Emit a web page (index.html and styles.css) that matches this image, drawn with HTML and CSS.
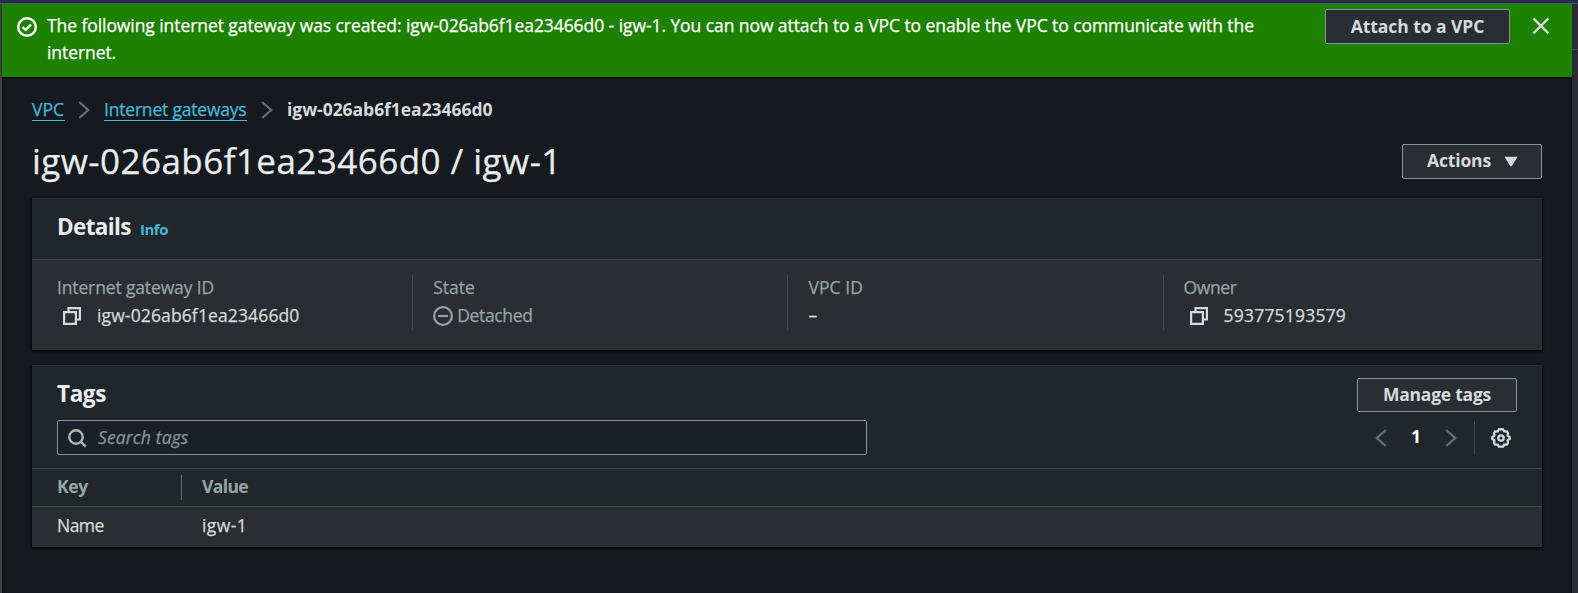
FILE: index.html
```
<!DOCTYPE html>
<html lang="en">
<head>
<meta charset="utf-8">
<title>Internet gateway details</title>
<link rel="stylesheet" href="styles.css">
</head>
<body>
<div class="topbar"></div>
<div class="shell">
  <div class="rail rail-left"></div>
  <main class="main">
    <div class="flash">
      <svg class="flash-icon" viewBox="0 0 20 20" width="20" height="20"><circle cx="10" cy="10" r="8.8"/><path d="M5.6 10.2l3 2.6 5.4-5.2"/></svg>
      <p class="flash-text">The following internet gateway was created: igw-026ab6f1ea23466d0 - igw-1. You can now attach to a VPC to enable the VPC to communicate with the<br>internet.</p>
      <button class="btn btn-attach">Attach to a VPC</button>
      <svg class="flash-close" viewBox="0 0 18 18" width="18" height="18"><path d="M1.4 1.4l15 15M16.4 1.4l-15 15"/></svg>
    </div>
    <div class="content">
      <nav class="crumbs">
        <a class="crumb-vpc">VPC</a>
        <svg class="chev" viewBox="0 0 12 18" width="12" height="18"><path d="M1.2 1l9 8-9 8"/></svg>
        <a class="crumb-igw">Internet gateways</a>
        <svg class="chev" viewBox="0 0 12 18" width="12" height="18"><path d="M1.2 1l9 8-9 8"/></svg>
        <b class="crumb-current">igw-026ab6f1ea23466d0</b>
      </nav>
      <div class="title-row">
        <h1>igw-026ab6f1ea23466d0 / igw-1</h1>
        <button class="btn btn-actions"><span>Actions</span><svg viewBox="0 0 14 11" width="14" height="11"><path d="M.4.8h13.2L8 9.8Q7 11 6 9.8z"/></svg></button>
      </div>
      <section class="card">
        <header class="card-head"><h2 class="h-details">Details</h2><a class="info">Info</a></header>
        <div class="columns">
          <div class="col"><div class="label l-igw">Internet gateway ID</div>
            <div class="value"><svg class="copy" viewBox="0 0 18 18" width="18" height="18"><path d="M5.5 4V1.1h11.4v11.4H14M1.1 5.1h11.8v11.8H1.1z"/></svg><span class="v-id">igw-026ab6f1ea23466d0</span></div></div>
          <div class="col"><div class="label">State</div>
            <div class="value muted"><svg class="minus" viewBox="0 0 20 20" width="20" height="20"><circle cx="10" cy="10" r="8.9"/><path d="M5 10h10"/></svg><span class="v-state">Detached</span></div></div>
          <div class="col"><div class="label l-vpc">VPC ID</div><div class="value">–</div></div>
          <div class="col"><div class="label l-owner">Owner</div>
            <div class="value"><svg class="copy" viewBox="0 0 18 18" width="18" height="18"><path d="M5.5 4V1.1h11.4v11.4H14M1.1 5.1h11.8v11.8H1.1z"/></svg><span class="v-owner">593775193579</span></div></div>
        </div>
      </section>
      <section class="card tags">
        <div class="tags-top"><h2 class="h-tags">Tags</h2><button class="btn btn-manage">Manage tags</button></div>
        <div class="tools">
          <div class="search">
            <svg viewBox="0 0 19 19" width="19" height="19"><circle cx="8" cy="8" r="6.7"/><path d="M12.7 12.7l5 5"/></svg>
            <span>Search tags</span>
          </div>
          <div class="pager">
            <svg class="chev" viewBox="0 0 12 18" width="12" height="18"><path d="M10.8 1L1.8 9l9 8"/></svg>
            <b>1</b>
            <svg class="chev" viewBox="0 0 12 18" width="12" height="18"><path d="M1.2 1l9 8-9 8"/></svg>
            <i class="sep"></i>
            <svg class="gear" viewBox="0 0 20 20" width="20" height="20"><path d="M10 1.2L12.1 1.4L13.2 3.4L15.9 3.5L17 5.2L16.6 7.6L18.7 9L18.7 11L16.6 12.4L17 14.8L15.9 16.5L13.2 16.6L12.1 18.6L7.9 18.6L6.8 16.6L4.1 16.5L3 14.8L3.4 12.4L1.3 11L1.3 9L3.4 7.6L3 5.2L4.1 3.5L6.8 3.4L7.9 1.4Z"/><circle cx="10" cy="10" r="2.7"/></svg>
          </div>
        </div>
        <div class="row row-head"><div class="cell c-key"><span>Key</span></div><div class="cell c-val">Value</div></div>
        <div class="row row-data"><div class="cell c-name">Name</div><div class="cell">igw-1</div></div>
      </section>
    </div>
  </main>
  <div class="rail rail-right"></div>
</div>
</body>
</html>
```
FILE: styles.css
```
* { box-sizing: border-box; }
body {
  margin: 0;
  height: 593px;
  overflow: hidden;
  display: flex;
  flex-direction: column;
  background: #16191f;
  color: #d5dbdb;
  font: 17.5px/27px "Open Sans", "Noto Sans", sans-serif;
  -webkit-text-stroke: .25px;
}
h1, h2, p { margin: 0; }
h2, b, button, .info, .row-head { -webkit-text-stroke: 0; }
svg { flex: none; fill: none; stroke: currentColor; }
.topbar { flex: none; height: 4px; background: #232f3e; border-bottom: 1px solid #4a5078; }
.shell { flex: 1; display: flex; min-height: 0; }
.rail { flex: none; }
.rail-left { width: 2px; background: #414141; }
.rail-right {
  width: 6px;
  background: linear-gradient(#414750, #414750) 0 45px / 6px 1px no-repeat #2a2e33;
}
.main { flex: 1; min-width: 0; box-shadow: inset -3px 0 3px -2px #0b0d10, inset 3px 0 3px -2px #0b0d10; }

.flash {
  display: flex;
  align-items: flex-start;
  height: 73px;
  padding: 8px 22px 0 15px;
  background: #1d8102;
  color: #fff;
  box-shadow: 0 1px 1px #000;
}
.flash-icon { margin-top: 5px; stroke-width: 2.4; }
.flash-text { flex: 1; margin-left: 10px; white-space: nowrap; letter-spacing: -.072px; }
.flash-close { margin: 5px 0 0 22px; stroke-width: 2.4; color: #d5dbdb; }

.btn {
  flex: none;
  display: flex;
  align-items: center;
  justify-content: center;
  height: 35px;
  padding: 0 0 2px;
  border: 1px solid #879596;
  border-radius: 2px;
  background: #2a2e33;
  color: #d5dbdb;
  font: bold 17.5px/27px "Open Sans", "Noto Sans", sans-serif;
}
.btn-attach { width: 185px; margin-top: -3px; padding-bottom: 1px; letter-spacing: -.066px; }
.btn-actions { width: 140px; gap: 13px; padding-left: 1px; letter-spacing: -.149px; }
.btn-actions svg { fill: currentColor; stroke: none; margin-top: 2px; }
.btn-manage { width: 160px; height: 34px; letter-spacing: -.242px; }

.content { padding: 19px 30px 0; }
.crumbs { display: flex; align-items: center; height: 27px; }
.crumbs a { align-self: flex-start; height: 25px; line-height: 27px; color: #44b9d6; border-bottom: 1px solid #44b9d6; }
.crumb-vpc { width: 33px; }
.crumb-igw { width: 143px; letter-spacing: -.198px; }
.crumb-current { letter-spacing: -.039px; }
.chev { color: #687078; stroke-width: 2.2; }
.crumbs .chev { margin: 1px 14px 0 13px; }
.crumbs .chev:last-of-type { margin-left: 14px; }
.title-row { display: flex; justify-content: space-between; align-items: flex-end; margin-top: 14px; height: 42px; }
h1 { font-weight: 400; font-size: 35px; line-height: 45px; margin-bottom: -4px; letter-spacing: .45px; color: #eaeded; }

.card { margin-top: 19px; background: #2a2e33; border-top: 1px solid #2b3036; box-shadow: 0 1px 2px #000, 1px 1px 2px #0008, -1px 1px 2px #0008; }
.card-head {
  display: flex;
  align-items: baseline;
  height: 61px;
  padding: 14px 25px 0;
  background: #21252c;
  border-bottom: 1px solid #414750;
}
h2 { font-size: 22.5px; line-height: 27px; color: #eaeded; }
.h-details { width: 83px; letter-spacing: -.65px; }
.info { font-size: 15px; font-weight: bold; letter-spacing: -.48px; color: #44b9d6; }
.columns { display: grid; grid-template-columns: repeat(4, 375.2px); height: 90px; padding: 15px 0 0 5px; }
.col { height: 55px; padding-left: 20px; border-left: 1px solid #414750; }
.col:first-child { border-color: transparent; padding-left: 19px; }
.label { height: 28px; margin-top: -1px; color: #95a5a6; }
.l-igw { letter-spacing: -.14px; }
.l-vpc { letter-spacing: .08px; }
.l-owner { letter-spacing: -.377px; }
.value { display: flex; align-items: center; height: 27px; }
.muted { color: #95a5a6; }
.copy { margin: 1px 16px 0 6px; stroke-width: 2.2; }
.minus { margin: 1px 4px 0 0; stroke-width: 2.2; }
.v-id { letter-spacing: .13px; }
.v-state { letter-spacing: -.35px; }
.v-owner { letter-spacing: .2px; }

.tags { margin-top: 15px; }
.tags-top { display: flex; justify-content: space-between; height: 54px; padding: 12px 25px 0; background: #21252c; }
.h-tags { margin-top: 2px; letter-spacing: -.379px; }
.tools { display: flex; justify-content: space-between; height: 48px; padding: 0 31px 0 25px; background: #21252c; }
.search {
  display: flex;
  align-items: center;
  width: 810px;
  height: 35px;
  padding: 0 0 1px 10px;
  border: 1px solid #879596;
  border-radius: 2px;
  background: #1a2029;
}
.search svg { margin: 2px 11px 0 0; color: #aab7b8; stroke-width: 2.4; }
.search span { font-style: italic; letter-spacing: .12px; color: #879596; }
.pager { display: flex; align-items: center; height: 35px; }
.pager b { width: 58px; margin-top: -2px; text-align: center; color: #fff; }
.sep { width: 1px; height: 34px; margin: 0 16px 0 17px; background: #414750; }
.pager .chev:first-child { margin-left: 1px; }
.gear { color: #d5dbdb; stroke-width: 2.3; }
.row { display: flex; padding-left: 25px; }
.row-head { height: 39px; border: solid #414750; border-width: 1px 0; background: #21252c; font-weight: bold; color: #95a5a6; align-items: center; }
.cell:first-child { width: 145px; }
.row-head .c-key { width: 125px; height: 25px; line-height: 23px; margin-right: 20px; border-right: 1px solid #687078; letter-spacing: -.305px; }
.c-val { letter-spacing: -.625px; margin-top: -2px; }
.row-data { height: 40px; padding-top: 5px; }
.c-name { letter-spacing: -.55px; }
.row-data .cell:last-child { letter-spacing: .4px; }
```
